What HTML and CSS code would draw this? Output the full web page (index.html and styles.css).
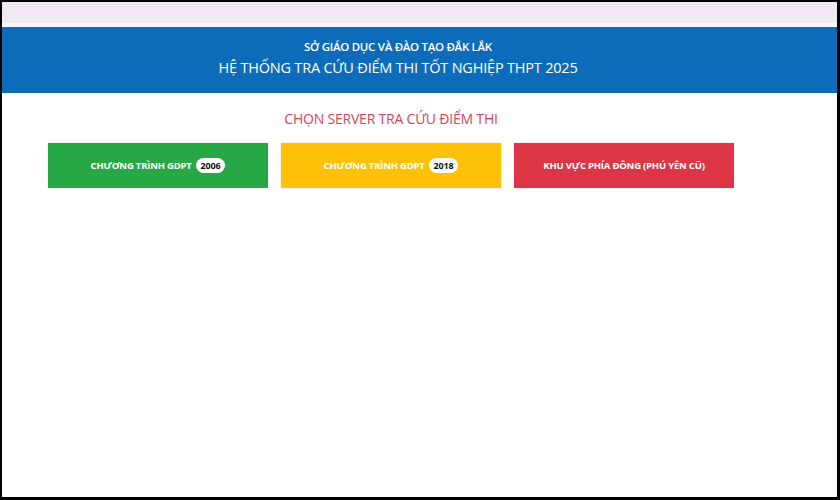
FILE: index.html
```html
<!DOCTYPE html>
<html lang="vi">
<head>
    <meta charset="UTF-8">
    <meta name="viewport" content="width=device-width, initial-scale=1.0">
    <title>Tra cứu điểm thi THPT 2025</title>
    <link rel="stylesheet" href="styles.css">
</head>
<body>
    <div class="frame">
        <div class="topbar"></div>
        <header class="banner">
            <div class="banner-sub">SỞ GIÁO DỤC VÀ ĐÀO TẠO ĐẮK LẮK</div>
            <div class="banner-title">HỆ THỐNG TRA CỨU ĐIỂM THI TỐT NGHIỆP THPT 2025</div>
        </header>
        <main class="content">
            <h2 class="section-title">CHỌN SERVER TRA CỨU ĐIỂM THI</h2>
            <div class="servers">
                <a class="server green" href="#">CHƯƠNG TRÌNH GDPT <span class="badge">2006</span></a>
                <a class="server yellow" href="#">CHƯƠNG TRÌNH GDPT <span class="badge">2018</span></a>
                <a class="server red" href="#">KHU VỰC PHÍA ĐÔNG (PHÚ YÊN CŨ)</a>
            </div>
        </main>
    </div>
</body>
</html>
```

FILE: styles.css
```css
* {
    margin: 0;
    padding: 0;
    box-sizing: border-box;
    font-family: 'Open Sans', 'Noto Sans', sans-serif;
}

html {
    background: #000;
}

body {
    width: 840px;
    height: 500px;
    overflow: hidden;
    padding: 2px 3px 3px 2px;
    background: #000;
}

.frame {
    height: 495px;
    background: #fff;
}

.topbar {
    height: 25px;
    background: #f1e9f1;
    border-bottom: 4px solid #faf6fa;
}

.banner {
    height: 66px;
    background: #0d6cba;
    color: #fff;
    text-align: center;
    padding: 11px 43px 0 0;
}

.banner-sub {
    font-size: 11.5px;
    font-weight: 600;
    letter-spacing: -0.3px;
    line-height: 18px;
}

.banner-title {
    font-size: 14.5px;
    font-weight: 500;
    letter-spacing: -0.2px;
    line-height: 24px;
}

.content {
    width: 686px;
    margin-left: 46px;
    padding-top: 16px;
}

.section-title {
    text-align: center;
    font-size: 14px;
    font-weight: 500;
    color: #e04058;
    letter-spacing: -0.2px;
    line-height: 20px;
    margin-bottom: 14px;
}

.servers {
    display: grid;
    grid-template-columns: repeat(3, 220px);
    gap: 13px;
}

.server {
    height: 45px;
    display: flex;
    align-items: center;
    justify-content: center;
    gap: 4px;
    color: #fff;
    text-decoration: none;
    font-size: 9.5px;
    font-weight: 700;
    letter-spacing: -0.2px;
    box-shadow: 0 0 1px rgba(0, 0, 0, 0.25);
}

.green {
    background-color: #28a745;
}

.yellow {
    background-color: #ffc107;
}

.red {
    background-color: #dc3545;
}

.badge {
    background: #fff;
    color: #111;
    border-radius: 8px;
    padding: 1px 5px;
    font-size: 9px;
    font-weight: 700;
}
```
